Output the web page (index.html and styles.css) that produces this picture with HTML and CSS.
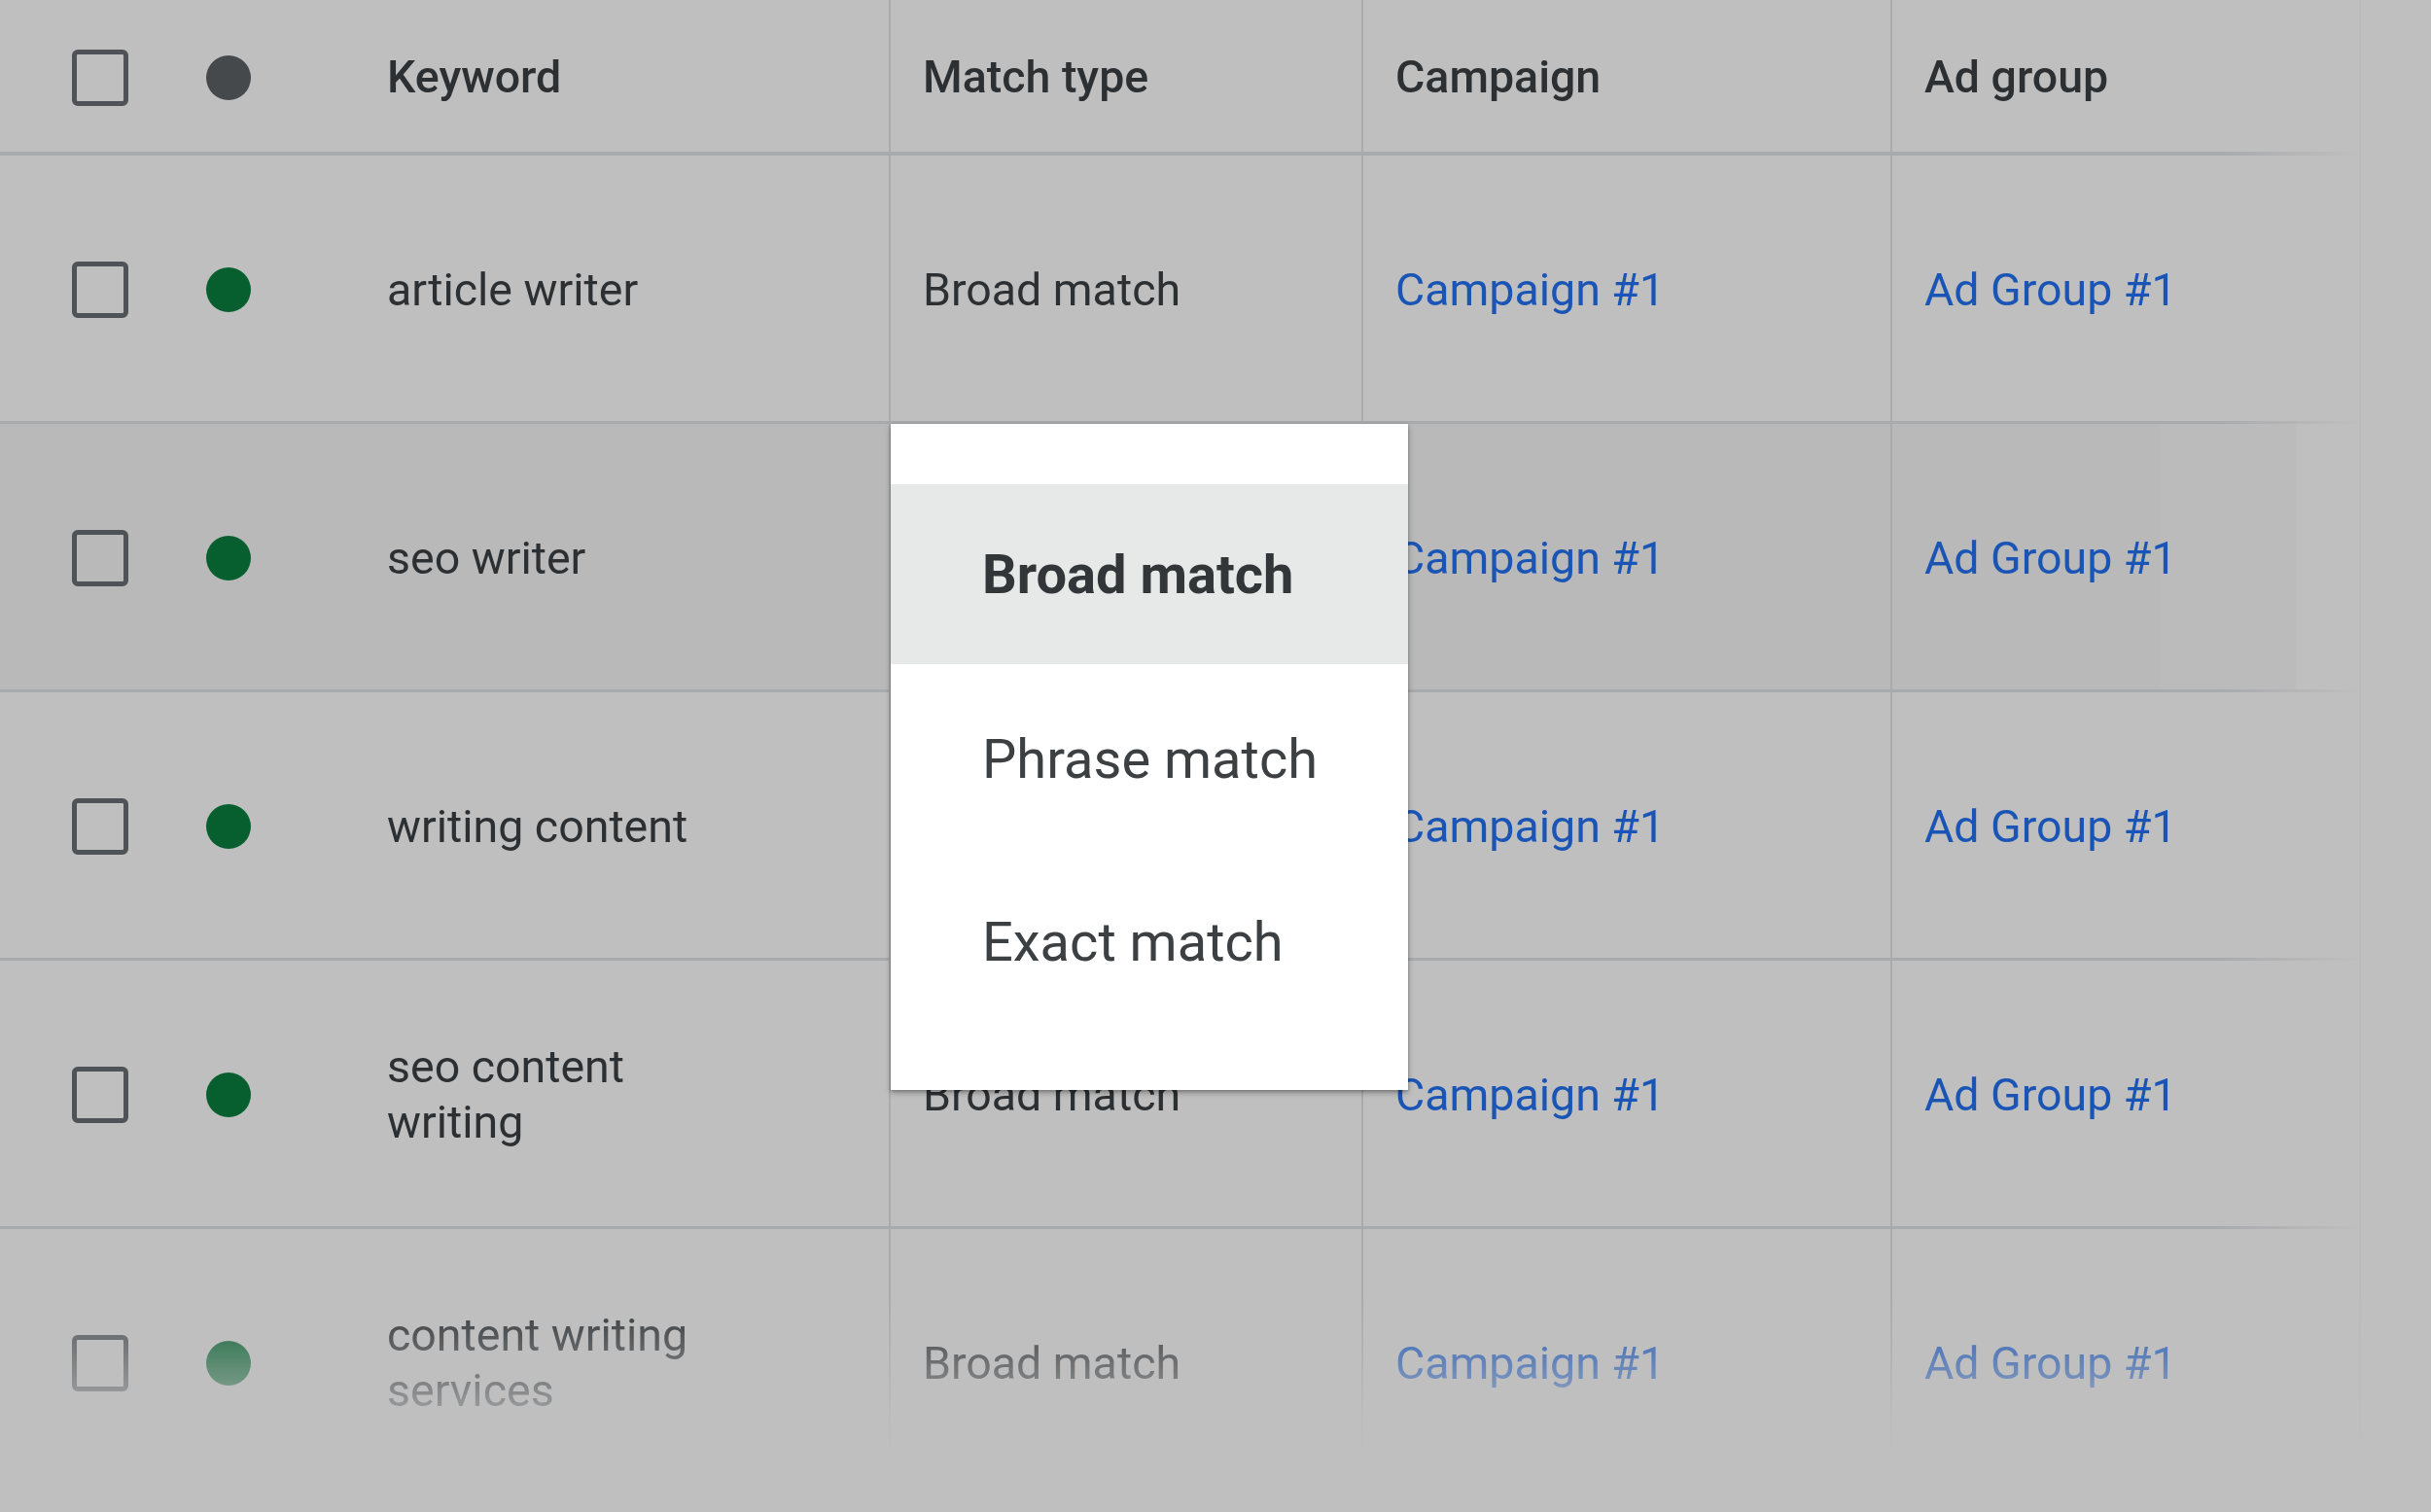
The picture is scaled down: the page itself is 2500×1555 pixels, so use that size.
FILE: index.html
```html
<!DOCTYPE html>
<html lang="en">
<head>
    <meta charset="UTF-8">
    <meta name="viewport" content="width=device-width, initial-scale=1.0">
    <title>Keywords</title>
    <link rel="stylesheet" href="styles.css">
</head>
<body>
    <div class="table">
        <div class="row head">
            <div class="cell lead">
                <span class="checkbox"></span>
                <span class="dot grey"></span>
            </div>
            <div class="cell keyword">Keyword</div>
            <div class="cell col">Match type</div>
            <div class="cell col">Campaign</div>
            <div class="cell col">Ad group</div>
        </div>

        <div class="row">
            <div class="cell lead">
                <span class="checkbox"></span>
                <span class="dot"></span>
            </div>
            <div class="cell keyword">article writer</div>
            <div class="cell col">Broad match</div>
            <div class="cell col"><a class="link" href="#">Campaign #1</a></div>
            <div class="cell col"><a class="link" href="#">Ad Group #1</a></div>
        </div>

        <div class="row active">
            <div class="cell lead">
                <span class="checkbox"></span>
                <span class="dot"></span>
            </div>
            <div class="cell keyword">seo writer</div>
            <div class="cell col anchor">
                <!-- match type dropdown is open on this row -->
                <ul class="menu">
                    <li class="menu-item selected">Broad match</li>
                    <li class="menu-item">Phrase match</li>
                    <li class="menu-item">Exact match</li>
                </ul>
            </div>
            <div class="cell col"><a class="link" href="#">Campaign #1</a></div>
            <div class="cell col"><a class="link" href="#">Ad Group #1</a></div>
        </div>

        <div class="row">
            <div class="cell lead">
                <span class="checkbox"></span>
                <span class="dot"></span>
            </div>
            <div class="cell keyword">writing content</div>
            <div class="cell col">Broad match</div>
            <div class="cell col"><a class="link" href="#">Campaign #1</a></div>
            <div class="cell col"><a class="link" href="#">Ad Group #1</a></div>
        </div>

        <div class="row">
            <div class="cell lead">
                <span class="checkbox"></span>
                <span class="dot"></span>
            </div>
            <div class="cell keyword">seo content writing</div>
            <div class="cell col">Broad match</div>
            <div class="cell col"><a class="link" href="#">Campaign #1</a></div>
            <div class="cell col"><a class="link" href="#">Ad Group #1</a></div>
        </div>

        <div class="row">
            <div class="cell lead">
                <span class="checkbox"></span>
                <span class="dot"></span>
            </div>
            <div class="cell keyword">content writing services</div>
            <div class="cell col">Broad match</div>
            <div class="cell col"><a class="link" href="#">Campaign #1</a></div>
            <div class="cell col"><a class="link" href="#">Ad Group #1</a></div>
        </div>
    </div>
</body>
</html>
```

FILE: styles.css
```css
body {
    font-family: Roboto, 'Liberation Sans', sans-serif;
    background-color: #bfbfbf;
    color: #2d3033;
    margin: 0;
    padding: 0;
    overflow: hidden;
    height: 1555px;
}
.table {
    width: 2426px;
    border-right: 2px solid #bababa;
    -webkit-mask-image: linear-gradient(to bottom, #000 1330px, transparent 1490px);
    mask-image: linear-gradient(to bottom, #000 1330px, transparent 1490px);
}
.row {
    display: grid;
    grid-template-columns: 398px 516px 486px 544px 482px;
    height: 273px;
    border-bottom: 3px solid #a9aaac;
    border-image: linear-gradient(to right, #a9aaac 94%, #bfbfbf 100%) 1;
    font-size: 46.5px;
}
.row.head {
    height: 156px;
    border-bottom-width: 4px;
    font-weight: 500;
}
.row.active {
    background: linear-gradient(to right, #b9b9b9 0, #b9b9b9 2220px, #bbbbbb 2222px, #bbbbbb 2360px, #bfbfbf 2362px);
}
.cell {
    display: flex;
    align-items: center;
    line-height: 57px;
    padding-top: 3px;
}
.lead {
    padding-left: 74px;
}
.keyword {
    padding-right: 150px;
}
.col {
    border-left: 2px solid #ababab;
    padding-left: 33px;
}
.checkbox {
    width: 48px;
    height: 48px;
    border: 5px solid #4f5256;
    border-radius: 6px;
}
.dot {
    width: 46px;
    height: 46px;
    border-radius: 50%;
    background-color: #075f30;
    margin-left: 80px;
}
.dot.grey {
    background-color: #46494c;
}
.link {
    color: #1a55b6;
    text-decoration: none;
}
.anchor {
    position: relative;
}
.menu {
    position: absolute;
    top: 0;
    left: 0;
    z-index: 10;
    width: 532px;
    margin: 0;
    padding: 62px 0 59px;
    list-style: none;
    background-color: #fff;
    box-shadow: 0 3px 6px rgba(0, 0, 0, 0.3), 0 1px 3px rgba(0, 0, 0, 0.2);
}
.menu-item {
    height: 188px;
    display: flex;
    align-items: center;
    padding-left: 94px;
    padding-top: 2px;
    box-sizing: border-box;
    font-size: 56px;
    font-weight: 400;
    color: #3c4043;
}
.menu-item.selected {
    height: 185px;
    margin-bottom: 3px;
    background-color: #e7e9e8;
    font-weight: 700;
    color: #333639;
}
```
